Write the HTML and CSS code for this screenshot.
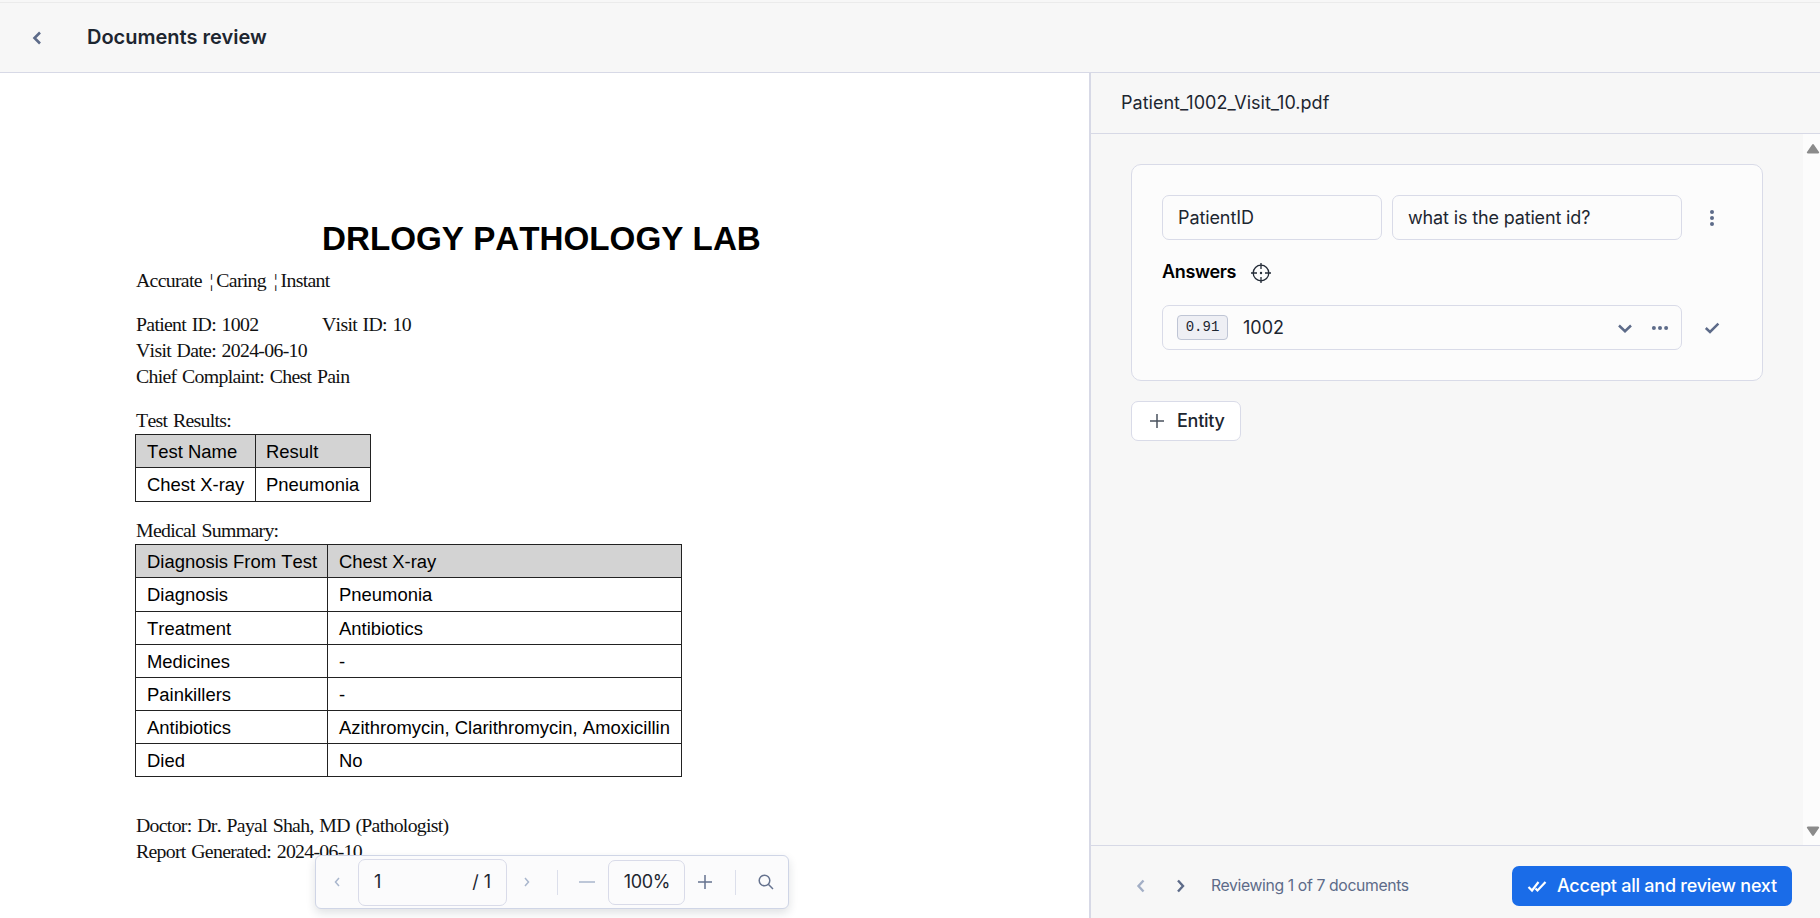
FILE: index.html
```html
<!DOCTYPE html>
<html lang="en">
<head>
<meta charset="utf-8">
<title>Documents review</title>
<link rel="stylesheet" href="styles.css">
</head>
<body>
<div class="app">
  <header class="header">
    <button class="back" aria-label="Back"><svg width="14" height="16" viewBox="0 0 14 16"><path d="M10 2.5 4.5 8 10 13.5"/></svg></button>
    <h1 class="title">Documents review</h1>
  </header>
  <div class="body">
    <main class="viewer">
      <article class="page">
        <h2 class="lab">DRLOGY PATHOLOGY LAB</h2>
        <p class="line tagline">Accurate <span class="bar">¦</span> Caring <span class="bar">¦</span> Instant</p>
        <p class="line ids"><span class="pid">Patient ID: 1002</span><span>Visit ID: 10</span></p>
        <p class="line">Visit Date: 2024-06-10</p>
        <p class="line">Chief Complaint: Chest Pain</p>
        <p class="line heading">Test Results:</p>
        <div class="grid results">
          <div class="cell head">Test Name</div><div class="cell head">Result</div>
          <div class="cell">Chest X-ray</div><div class="cell">Pneumonia</div>
        </div>
        <p class="line heading">Medical Summary:</p>
        <div class="grid summary">
          <div class="cell head">Diagnosis From Test</div><div class="cell head">Chest X-ray</div>
          <div class="cell">Diagnosis</div><div class="cell">Pneumonia</div>
          <div class="cell">Treatment</div><div class="cell">Antibiotics</div>
          <div class="cell">Medicines</div><div class="cell">-</div>
          <div class="cell">Painkillers</div><div class="cell">-</div>
          <div class="cell">Antibiotics</div><div class="cell">Azithromycin, Clarithromycin, Amoxicillin</div>
          <div class="cell">Died</div><div class="cell">No</div>
        </div>
        <p class="line doctor">Doctor: Dr. Payal Shah, MD (Pathologist)</p>
        <p class="line">Report Generated: 2024-06-10</p>
      </article>
      <div class="toolbar">
        <svg class="tb-prev faint" width="10" height="12" viewBox="0 0 10 12"><path d="M7 2 3.5 6 7 10"/></svg>
        <div class="pagebox"><span>1</span><span>/ 1</span></div>
        <svg class="tb-next faint" width="10" height="12" viewBox="0 0 10 12"><path d="M3 2 6.5 6 3 10"/></svg>
        <i class="sep sep-a"></i>
        <svg class="tb-minus faint" width="16" height="16" viewBox="0 0 16 16"><path d="M0 8h16"/></svg>
        <div class="zoombox">100%</div>
        <svg class="tb-plus" width="16" height="16" viewBox="0 0 16 16"><path d="M1 8h14M8 1v14"/></svg>
        <i class="sep sep-b"></i>
        <svg class="tb-search" width="18" height="18" viewBox="0 0 18 18"><circle cx="7.5" cy="7.5" r="5.3"/><path d="m11.3 11.3 4.700 4.700"/></svg>
      </div>
    </main>
    <aside class="panel">
      <div class="panel-head">Patient_1002_Visit_10.pdf</div>
      <div class="scroll">
        <div class="content">
          <section class="card">
            <div class="row">
              <div class="field name">PatientID</div>
              <div class="field question">what is the patient id?</div>
              <svg class="dots" width="20" height="20" viewBox="0 0 20 20"><circle cx="10" cy="3.9" r="2"/><circle cx="10" cy="10" r="2"/><circle cx="10" cy="16.1" r="2"/></svg>
            </div>
            <div class="answers"><span>Answers</span><svg class="target" width="20" height="20" viewBox="0 0 20 20"><circle cx="10" cy="10" r="7.8"/><path d="M10 0v6M10 14v6M0 10h6M14 10h6"/><circle class="pt" cx="10" cy="10" r="1.2"/></svg></div>
            <div class="row">
              <div class="field answer">
                <span class="score">0.91</span><span class="value">1002</span>
                <svg class="down" width="16" height="16" viewBox="0 0 16 16"><path d="M2 5.500 8 11.200 14 5.500"/></svg>
                <svg class="dots" width="20" height="20" viewBox="0 0 20 20"><circle cx="3.9" cy="10" r="2"/><circle cx="10" cy="10" r="2"/><circle cx="16.1" cy="10" r="2"/></svg>
              </div>
              <svg class="check" width="20" height="20" viewBox="0 0 20 20"><path d="m3.800 10 4.200 4 8.400-8.400"/></svg>
            </div>
          </section>
          <button class="entity"><svg width="14" height="14" viewBox="0 0 14 14"><path d="M0 7h14M7 0v14"/></svg>Entity</button>
        </div>
        <div class="scrollbar">
          <svg width="14" height="10" viewBox="0 0 14 10"><path d="M6 .8a1.2 1.2 0 0 1 2 0l5 7.200a1 1 0 0 1-1 1.500H2a1 1 0 0 1-1-1.500z"/></svg>
          <svg width="14" height="10" viewBox="0 0 14 10"><path d="M6 9.200a1.2 1.2 0 0 0 2 0l5-7.200a1 1 0 0 0-1-1.500H2a1 1 0 0 0-1 1.500z"/></svg>
        </div>
      </div>
      <footer class="footer">
        <svg class="nav off" width="12" height="16" viewBox="0 0 12 16"><path d="M8.500 2.500 3.500 8l5 5.500"/></svg>
        <svg class="nav next" width="12" height="16" viewBox="0 0 12 16"><path d="M3 2.500 8 8l-5 5.500"/></svg>
        <span class="status">Reviewing 1 of 7 documents</span>
        <button class="accept"><svg width="20" height="14" viewBox="0 0 20 14"><path d="m1.500 8 3.500 3.500L11.500 3M8.500 9.500 10.500 11.500 18.500 3"/></svg>Accept all and review next</button>
      </footer>
    </aside>
  </div>
</div>
</body>
</html>
```
FILE: styles.css
```css
* { box-sizing: border-box; }
body {
  margin: 0;
  background: #fff;
  color: #1d2630;
  font: 18px/24px Inter, sans-serif;
  overflow: hidden;
}
button { font: inherit; color: inherit; border: 0; padding: 0; background: none; }
svg { fill: none; stroke: #5d6b89; display: block; flex: none; }
.app { display: flex; flex-direction: column; height: 918px; }
.header {
  height: 73px;
  flex: none;
  display: flex;
  align-items: center;
  padding-left: 30px;
  background: linear-gradient(#ebebeb, #ebebeb) 0 2px / 100% 1px no-repeat #f7f7f7;
  border-bottom: 1px solid #d7d9e6;
}
.back { margin-top: 4px; width: 57px; }
.back svg { stroke-width: 2.6; }
.title { margin: 1px 0 0; font-size: 20px; font-weight: 600; line-height: 28px; }
.body { flex: 1; display: flex; min-height: 0; }

.viewer { width: 1089px; position: relative; overflow: hidden; background: #fff; }
.page { padding: 146px 0 0 135px; color: #000; }
.lab {
  margin: 0 0 0 187px;
  font: bold 33.2px/40px "Liberation Sans", sans-serif;
  font-kerning: none;
  white-space: nowrap;
}
.line {
  margin: 0;
  padding-left: 1px;
  font: 19.8px/25.85px "Liberation Serif", serif;
  font-kerning: none;
  letter-spacing: -.7px;
  word-spacing: 1.4px;
  white-space: pre;
  color: #111;
}
.tagline { margin: 9px 0 18px; }
.bar { margin: 0 -2px 0 2px; }
.ids { display: flex; }
.pid { width: 186px; }
.heading { margin-top: 19px; }
.grid {
  display: grid;
  font: 18.45px/34px "Liberation Sans", sans-serif;
  font-kerning: none;
  border: solid #222;
  border-width: 1px 0 0 1px;
  width: max-content;
}
.results { grid-template-columns: 120px 115px; }
.summary { grid-template-columns: 192px 354px; margin-top: 1px; }
.summary + .doctor { margin-top: 36px; }
.results + .heading { margin-top: 16px; }
.cell { padding-left: 11px; border: solid #222; border-width: 0 1px 1px 0; height: 33.15px; white-space: nowrap; }
.results .cell:nth-child(even) { padding-left: 10px; }
.head { background: #d3d3d3; }

.toolbar {
  position: absolute;
  left: 315px;
  top: 782px;
  width: 474px;
  height: 54px;
  display: flex;
  align-items: center;
  padding-left: 16px;
  border: 1px solid #cfd5e6;
  border-radius: 6px;
  background: #fbfbfc;
  box-shadow: 0 4px 10px rgba(30, 40, 60, .14);
}
.toolbar svg { stroke: #66738f; stroke-width: 1.5; }
.toolbar svg.faint { stroke: #a9b6cd; }
.pagebox, .zoombox { border: 1px solid #d9dbe9; border-radius: 7px; }
.pagebox { width: 149px; height: 47px; margin-left: 16px; padding: 0 15px 1px; display: flex; align-items: center; justify-content: space-between; }
.zoombox { width: 77px; height: 45px; line-height: 42px; text-align: center; margin-left: 12px; letter-spacing: -.3px; padding-left: 1px; }
.tb-next { margin-left: 15px; }
.sep { width: 1px; height: 25px; background: #dcdfeb; }
.sep-a { margin-left: 25px; }
.tb-minus { margin-left: 21px; }
.tb-plus { margin-left: 12px; }
.sep-b { margin-left: 22px; }
.tb-search { margin-left: 21px; }
.toolbar .zoombox { margin-left: 13px; }

.panel { flex: 1; display: flex; flex-direction: column; background: #f7f7f7; border-left: 2px solid #d7d9e6; }
.panel-head { height: 61px; flex: none; padding: 18px 0 0 30px; border-bottom: 1px solid #d7d9e6; letter-spacing: .02px; }
.scroll { flex: 1; display: flex; }
.content { flex: 1; padding: 30px 40px 0; }
.scrollbar { width: 17px; background: #fcfcfc; display: flex; flex-direction: column; justify-content: space-between; align-items: center; padding: 10px 0 9px 2px; }
.scrollbar svg { fill: #8b8b8b; stroke: none; }
.card { width: 632px; height: 217px; padding: 30px; border: 1px solid #d9dbe8; border-radius: 10px; background: #fcfcfc; }
.row { display: flex; align-items: center; }
.field { height: 45px; border: 1px solid #d9dbe8; border-radius: 7px; padding: 0 15px; line-height: 43px; }
.name { width: 220px; margin-right: 10px; letter-spacing: -.1px; }
.question { width: 290px; letter-spacing: -.15px; }
.dots { fill: #5d6b89; stroke: none; }
.row > .dots, .check { margin-left: 20px; }
.check { stroke-width: 2.5; }
.answers { height: 65px; display: flex; align-items: center; gap: 15px; font-weight: 600; color: #000; }
.answers span { margin-top: -1px; letter-spacing: -.35px; }
.target { stroke: #222a36; stroke-width: 1.3; margin-top: 1px; }
.target .pt { fill: #222a36; stroke: none; }
.answer { width: 520px; display: flex; align-items: center; padding: 0 11px 0 14px; }
.score { width: 51px; height: 25px; border: 1px solid #bfc5d5; border-radius: 4px; background: #eeeff4; font: 14px/22px "Liberation Mono", monospace; text-align: center; }
.value { margin-left: 15px; flex: 1; }
.down { stroke-width: 2.5; margin-right: 17px; }
.entity { margin-top: 20px; width: 110px; height: 40px; border: 1px solid #d9dbe8; border-radius: 7px; background: #fff; display: flex; align-items: center; padding: 0 0 1px 18px; gap: 13px; font-weight: 500; letter-spacing: -.25px; }
.entity svg { stroke: #4a525e; stroke-width: 1.5; }
.footer { height: 73px; flex: none; border-top: 1px solid #d7d9e6; display: flex; align-items: center; padding: 8px 28px 0 44px; }
.nav { stroke-width: 2.4; }
.nav.off { stroke: #a3afc6; }
.next { margin-left: 28px; }
.status { flex: 1; margin-left: 24px; font-size: 15.75px; letter-spacing: -.37px; color: #5d6b89; white-space: nowrap; }
.accept { width: 280px; height: 40px; border-radius: 7px; background: #1a6ce8; color: #fff; display: flex; align-items: center; padding-left: 15px; gap: 10px; font-weight: 500; letter-spacing: -.25px; white-space: nowrap; }
.accept svg { stroke: #fff; stroke-width: 2.2; }
```
